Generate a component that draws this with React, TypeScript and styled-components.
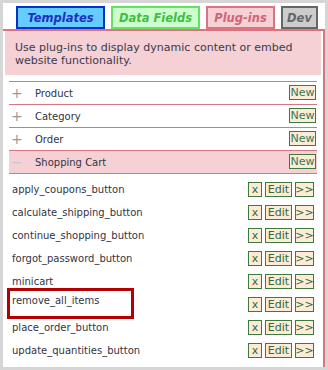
import React from "react";
import styled, { createGlobalStyle } from "styled-components";

const GlobalStyle = createGlobalStyle`
  html, body {
    margin: 0;
    padding: 0;
    background: #d6d6d6;
  }
  body {
    font-family: "DejaVu Sans", Verdana, sans-serif;
  }
`;

type TabKind = "templates" | "fields" | "plugins" | "dev";

const tabStyles: Record<
  TabKind,
  { bg: string; border: string; text: string; width: number }
> = {
  templates: { bg: "#66ccff", border: "#0033cc", text: "#1a33bb", width: 89 },
  fields: { bg: "#ccffcc", border: "#66e066", text: "#44bb44", width: 89 },
  plugins: { bg: "#f5d0d5", border: "#d97480", text: "#d06474", width: 69 },
  dev: { bg: "#cccccc", border: "#666666", text: "#666666", width: 37 },
};

const Page = styled.div`
  padding: 3px 3px 0 3px;
  width: 322px;
  height: 367px;
  overflow: hidden;
`;

const Frame = styled.div`
  background: #ffffff;
  height: 364px;
  overflow: hidden;
`;

const TabBar = styled.div`
  display: flex;
  gap: 6px;
  padding: 3px 0 0 13px;
`;

const Tab = styled.div<{ kind: TabKind }>`
  box-sizing: border-box;
  width: ${(p) => tabStyles[p.kind].width}px;
  height: 23px;
  display: flex;
  align-items: center;
  justify-content: center;
  white-space: nowrap;
  border: 2px solid ${(p) => tabStyles[p.kind].border};
  background: ${(p) => tabStyles[p.kind].bg};
  color: ${(p) => tabStyles[p.kind].text};
  font-size: 11.5px;
  font-weight: bold;
  font-style: italic;
`;

const Panel = styled.div`
  border-top: 2px solid #d97480;
  border-right: 2px solid #d97480;
  padding: 0 2px 0 2px;
  height: 400px;
`;

const Description = styled.div`
  background: #f5d0d5;
  color: #3a3a4a;
  font-size: 11px;
  line-height: 13px;
  padding: 10px 10px 0 10px;
  height: 34px;
`;

const List = styled.div`
  margin: 6px 4px 0 4px;
  border-top: 1px solid #d97480;
`;

const CategoryRow = styled.div<{ open?: boolean }>`
  display: flex;
  align-items: center;
  height: 22px;
  border-bottom: 1px solid #d97480;
  background: ${(p) => (p.open ? "#f5d0d5" : "#ffffff")};
  font-size: 10px;
  color: #333344;
`;

const Toggle = styled.span<{ open?: boolean }>`
  width: 24px;
  padding-left: 2px;
  font-size: 14px;
  color: ${(p) => (p.open ? "#c8c8c8" : "#999999")};
`;

const CategoryName = styled.span`
  flex: 1;
`;

const SmallButton = styled.span<{ w: number }>`
  box-sizing: border-box;
  width: ${(p) => p.w}px;
  height: 15px;
  display: inline-flex;
  align-items: center;
  justify-content: center;
  border: 1px solid #3d7a3d;
  background: #fdebd6;
  color: #2d6a3d;
  font-size: 11px;
`;

const NewButton = styled(SmallButton)`
  margin-right: 1px;
  margin-top: -2px;
  color: #2f7a5a;
`;

const Items = styled.div`
  padding: 4px 0 6px 0;
  border-bottom: 1px solid #d97480;
`;

const ItemRow = styled.div`
  position: relative;
  display: flex;
  align-items: center;
  height: 23px;
  padding: 0 3px;
`;

const ItemName = styled.span<{ raised?: boolean }>`
  flex: 1;
  font-size: 10px;
  color: #333344;
  align-self: ${(p) => (p.raised ? "flex-start" : "center")};
  padding-top: ${(p) => (p.raised ? "2px" : "0")};
`;

const Actions = styled.div`
  display: flex;
  gap: 3px;
`;

const Highlight = styled.div`
  position: absolute;
  left: -2px;
  top: -5px;
  width: 127px;
  height: 31px;
  box-sizing: border-box;
  border: 3px solid #b30000;
  pointer-events: none;
`;

const categories = [
  { name: "Product", open: false },
  { name: "Category", open: false },
  { name: "Order", open: false },
  { name: "Shopping Cart", open: true },
];

const items = [
  "apply_coupons_button",
  "calculate_shipping_button",
  "continue_shopping_button",
  "forgot_password_button",
  "minicart",
  "remove_all_items",
  "place_order_button",
  "update_quantities_button",
];

const App = (): JSX.Element => {
  return (
    <Page>
      <GlobalStyle />
      <Frame>
        <TabBar>
          <Tab kind="templates">Templates</Tab>
          <Tab kind="fields">Data Fields</Tab>
          <Tab kind="plugins">Plug-ins</Tab>
          <Tab kind="dev">Dev</Tab>
        </TabBar>
        <Panel>
          <Description>
            Use plug-ins to display dynamic content or embed website
            functionality.
          </Description>
          <List>
            {categories.map((c) => (
              <CategoryRow key={c.name} open={c.open}>
                <Toggle open={c.open}>{c.open ? "−" : "+"}</Toggle>
                <CategoryName>{c.name}</CategoryName>
                <NewButton w={27}>New</NewButton>
              </CategoryRow>
            ))}
            <Items>
              {items.map((name) => {
                const marked = name === "remove_all_items";
                return (
                  <ItemRow key={name}>
                    <ItemName raised={marked}>{name}</ItemName>
                    <Actions>
                      <SmallButton w={14}>x</SmallButton>
                      <SmallButton w={27}>Edit</SmallButton>
                      <SmallButton w={19}>&gt;&gt;</SmallButton>
                    </Actions>
                    {marked && <Highlight />}
                  </ItemRow>
                );
              })}
            </Items>
          </List>
        </Panel>
      </Frame>
    </Page>
  );
};

export default App;
